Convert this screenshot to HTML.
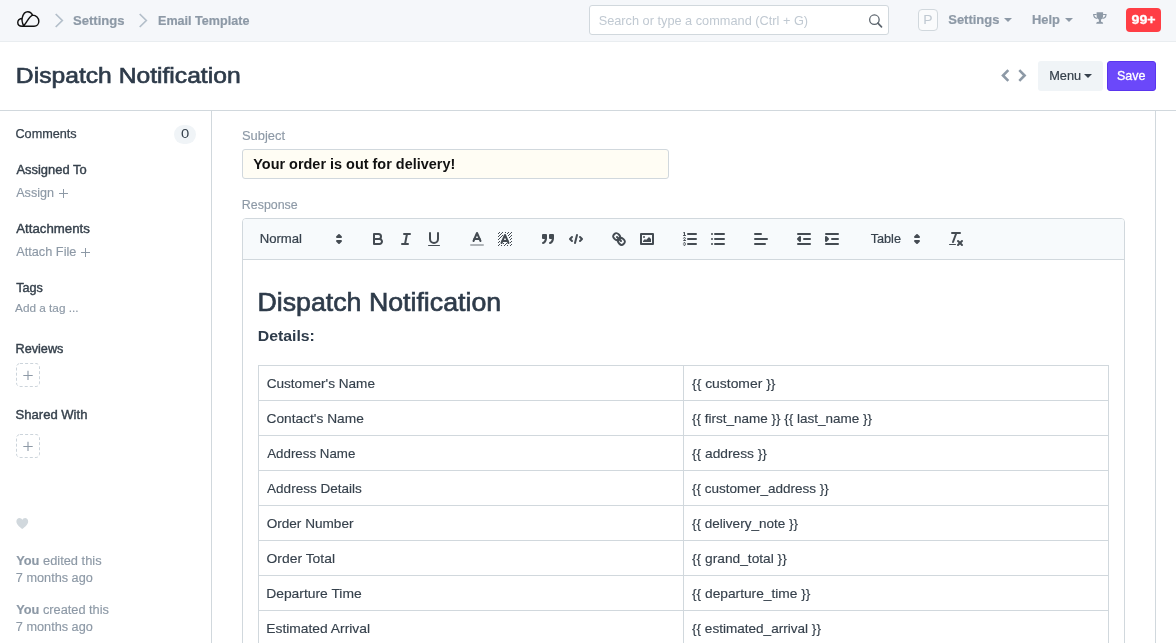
<!DOCTYPE html>
<html><head><meta charset="utf-8"><title>Dispatch Notification</title>
<style>
*{box-sizing:border-box;margin:0;padding:0}
html,body{width:1176px;height:643px;overflow:hidden;background:#fff;font-family:"Liberation Sans",sans-serif}
.a{position:absolute}
.t{position:absolute;white-space:nowrap;transform-origin:0 0;font-family:"Liberation Sans",sans-serif}
.t b{font-weight:bold}
#nav{left:0;top:0;width:1176px;height:42px;background:#f5f7fa;border-bottom:1px solid #e9edf0}
#search{left:589px;top:5px;width:300px;height:30px;border:1px solid #d1d8dd;border-radius:3px;background:#fff}
#avatar{left:918px;top:9px;width:20px;height:22px;border:1px solid #d1d8dd;border-radius:4px;background:#fafbfc}
#badge{left:1126px;top:8px;width:35px;height:24px;background:#ff3e45;border-radius:4px}
.caret{width:0;height:0;border-left:4px solid transparent;border-right:4px solid transparent;border-top:4px solid #8d99a6}
#hline{left:0;top:110px;width:1176px;height:1px;background:#d1d8dd}
#sline{left:211px;top:111px;width:1px;height:532px;background:#d1d8dd}
#vline{left:1155px;top:111px;width:1px;height:532px;background:#d1d8dd}
#menu{left:1038px;top:61px;width:65px;height:30px;background:#f0f4f7;border-radius:3px}
#save{left:1107px;top:61px;width:49px;height:30px;background:#6b48fa;border:1px solid #5a35ee;border-radius:3px}
#pill{left:174px;top:125px;width:22px;height:19px;border-radius:10px;background:#f0f4f7}
.dash{left:16px;width:24px;height:24px;border:1px dashed #d1d8dd;border-radius:3px}
.pl:before{content:"";position:absolute;left:0;top:4px;width:9px;height:1px;background:#8d99a6}
.pl:after{content:"";position:absolute;left:4px;top:0;width:1px;height:9px;background:#8d99a6}
.pl{width:9px;height:9px}
#subj{left:242px;top:149px;width:427px;height:30px;background:#fffdf4;border:1px solid #d1d8dd;border-radius:3px}
#ed{left:242px;top:218px;width:883px;height:440px;border:1px solid #d1d8dd;border-radius:4px 4px 0 0;background:#fff}
#tb{left:243px;top:219px;width:881px;height:40px;background:#f7fafc;border-radius:3px 3px 0 0}
#tbl{left:243px;top:259px;width:881px;height:1px;background:#d1d8dd}
.q{position:absolute;top:230px;width:18px;height:18px;fill:none;stroke:#444b52;stroke-width:2;stroke-linecap:round;stroke-linejoin:round}
.q .f{fill:#444b52;stroke:none}
.q .fs{fill:#444b52}
.q .th{stroke-width:1}
.q .tr{opacity:.4}
.q .ev{fill-rule:evenodd}
.gl{position:absolute;background:#d1d8dd}
</style></head><body>
<div class="a" id="nav"></div>
<svg class="a" style="left:16px;top:9px" width="25" height="20" viewBox="0 0 25 20"><path d="M7.300 16.900 C5.700 13.600 5.100 10.600 5.800 8.200 C6.700 4.500 8.900 1.900 11.700 1.900 C14 1.900 15.700 3.200 16.800 5.500 C12.600 7 11 13.300 7.300 16.900 Z M5.700 8.800 C3 9.300 1 11 1 13.400 C1 15.800 3 17.400 5.600 17.400 L18.300 17.400 C21.400 17.400 23.400 15 23.400 12 C23.400 8.500 20.600 5.700 16.800 5.500" fill="none" stroke="#111" stroke-width="1.520" stroke-linejoin="round" stroke-linecap="round" transform="translate(12.200 9.900) scale(0.940) translate(-12.100 -9.500)"/></svg>
<svg class="a" style="left:54px;top:13px" width="10" height="15" viewBox="0 0 10 15"><path d="M1.700 1 L8.300 7.500 L1.700 14" fill="none" stroke="#b4bfca" stroke-width="1.700"/></svg>
<svg class="a" style="left:138px;top:13px" width="10" height="15" viewBox="0 0 10 15"><path d="M1.700 1 L8.300 7.500 L1.700 14" fill="none" stroke="#b4bfca" stroke-width="1.700"/></svg>
<div class="a" id="search"></div>
<svg class="a" style="left:868px;top:14px" width="16" height="15" viewBox="0 0 16 15"><circle cx="6.400" cy="5.700" r="4.750" fill="none" stroke="#5b646d" stroke-width="1.300"/><path d="M9.900 9.200 L13.500 12.800" stroke="#5b646d" stroke-width="1.700" stroke-linecap="round"/></svg>
<div class="a" id="avatar"></div>
<div class="a caret" style="left:1004px;top:18px"></div>
<div class="a caret" style="left:1065px;top:18px"></div>
<svg class="a" style="left:1092px;top:12px" width="16" height="13" viewBox="0 0 16 13"><path d="M4.600 0.200 H11.100 V3.500 C11.100 6 9.800 7.200 9 7.600 V9.700 L10.400 10.100 L11.200 11.800 H4.100 L4.900 10.100 L6.900 9.700 V7.600 C6 7.200 4.600 6 4.600 3.500 Z" fill="#8d99a6"/><path d="M4.600 2.500 H1.700 C1.700 4.800 2.900 6.200 5.300 6.400 M11.100 2.500 H14 C14 4.800 12.800 6.200 10.400 6.400" fill="none" stroke="#8d99a6" stroke-width="1.200"/></svg>
<div class="a" id="badge"></div>
<div class="a" id="hline"></div>
<div class="a" id="sline"></div>
<div class="a" id="vline"></div>
<svg class="a" style="left:1000px;top:68px" width="28" height="15" viewBox="0 0 28 15"><path d="M8.300 2.200 L3 7.500 L8.300 12.800 M19.300 2.200 L24.600 7.500 L19.300 12.800" fill="none" stroke="#8d99a6" stroke-width="2.600"/></svg>
<div class="a" id="menu"></div>
<div class="a caret" style="left:1084px;top:74px;border-top-color:#36414c"></div>
<div class="a" id="save"></div>
<div class="a" id="pill"></div>
<div class="a pl" style="left:59px;top:189px"></div>
<div class="a pl" style="left:81px;top:248px"></div>
<svg class="a" style="left:14px;top:361px" width="28" height="28" viewBox="0 0 28 28"><rect x="2.500" y="2.500" width="23" height="23" rx="3.500" fill="none" stroke="#ccd4db" stroke-width="1" stroke-dasharray="3 2.100"/><path d="M14 9.800 V18.900 M9.300 14.500 H18.700" stroke="#8d99a6" stroke-width="1.100" fill="none"/></svg>
<svg class="a" style="left:14px;top:432px" width="28" height="28" viewBox="0 0 28 28"><rect x="2.500" y="2.500" width="23" height="23" rx="3.500" fill="none" stroke="#ccd4db" stroke-width="1" stroke-dasharray="3 2.100"/><path d="M14 9.800 V18.900 M9.300 14.500 H18.700" stroke="#8d99a6" stroke-width="1.100" fill="none"/></svg>
<svg class="a" style="left:16px;top:517px" width="13" height="13" viewBox="0 0 13 13"><path d="M6.500 11.500 C3.500 9 0.300 6.800 0.300 3.800 C0.300 1.800 1.800 0.500 3.500 0.500 C4.800 0.500 5.900 1.200 6.500 2.300 C7.100 1.200 8.200 0.500 9.500 0.500 C11.200 0.500 12.700 1.800 12.700 3.800 C12.700 6.800 9.500 9 6.500 11.500 Z" fill="#d1d8dd" transform="translate(0.100 0.600) scale(0.950 1)"/></svg>
<div class="a" id="subj"></div>
<div class="a" id="ed"></div>
<div class="a" id="tb"></div>
<div class="a" id="tbl"></div>
<!-- toolbar icons -->
<svg class="q" style="left:330px" viewBox="0 0 18 18"><polygon class="fs" style="stroke-width:1.900" points="7 11 9 13 11 11 7 11"/><polygon class="fs" style="stroke-width:1.900" points="7 7 9 5 11 7 7 7"/></svg>
<svg class="q" style="left:369px" viewBox="0 0 18 18"><path d="M5,4H9.500A2.500,2.500,0,0,1,12,6.500v0A2.500,2.500,0,0,1,9.500,9H5V4Z"/><path d="M5,9h5.500A2.500,2.500,0,0,1,13,11.500v0A2.500,2.500,0,0,1,10.500,14H5V9Z"/></svg>
<svg class="q" style="left:397px" viewBox="0 0 18 18"><line x1="7" x2="13" y1="4" y2="4"/><line x1="5" x2="11" y1="14" y2="14"/><line x1="8" x2="10" y1="14" y2="4"/></svg>
<svg class="q" style="left:425px" viewBox="0 0 18 18"><path d="M5,3V9a4.012,4.012,0,0,0,4,4H9a4.012,4.012,0,0,0,4-4V3"/><rect class="f" height="1" rx="0.500" ry="0.500" width="12" x="3" y="15"/></svg>
<svg class="q" style="left:468px" viewBox="0 0 18 18"><line class="tr" x1="3" x2="15" y1="15" y2="15"/><polyline points="5.500 11 9 3 12.500 11"/><line x1="11.630" x2="6.380" y1="9" y2="9"/></svg>
<svg class="q" style="left:496px" viewBox="0 0 18 18"><path class="f" d="M2 3h1v1h-1zM2 6h1v1h-1zM2 9h1v1h-1zM2 12h1v1h-1zM2 15h1v1h-1zM3 2h1v1h-1zM3 5h1v1h-1zM3 8h1v1h-1zM3 11h1v1h-1zM3 14h1v1h-1zM4 4h1v1h-1zM4 7h1v1h-1zM5 3h1v1h-1zM5 6h1v1h-1zM5 15h1v1h-1zM6 2h1v1h-1zM6 5h1v1h-1zM7 13h1v1h-1zM8 15h1v1h-1zM9 2h1v1h-1zM9 14h1v1h-1zM10 13h1v1h-1zM11 3h1v1h-1zM11 15h1v1h-1zM12 2h1v1h-1zM12 5h1v1h-1zM13 4h1v1h-1zM13 7h1v1h-1zM14 3h1v1h-1zM14 6h1v1h-1zM14 9h1v1h-1zM14 12h1v1h-1zM14 15h1v1h-1zM15 2h1v1h-1zM15 5h1v1h-1zM15 8h1v1h-1zM15 11h1v1h-1zM15 14h1v1h-1z"/><polyline points="5.500 13 9 5 12.500 13"/><line x1="11.630" x2="6.380" y1="11" y2="11"/></svg>
<svg class="q" style="left:539px" viewBox="0 0 18 18"><rect class="fs" height="3" width="3" x="4" y="5"/><rect class="fs" height="3" width="3" x="11" y="5"/><path class="fs ev" d="M7,8c0,4.031-3,5-3,5"/><path class="fs ev" d="M14,8c0,4.031-3,5-3,5"/></svg>
<svg class="q" style="left:567px" viewBox="0 0 18 18"><polyline points="5 7 3 9 5 11"/><polyline points="13 7 15 9 13 11"/><line x1="10" x2="8" y1="5" y2="13"/></svg>
<svg class="q" style="left:610px" viewBox="0 0 18 18"><line x1="7" x2="11" y1="7" y2="11"/><path d="M8.900,4.577a3.476,3.476,0,0,1,.36,4.679A3.476,3.476,0,0,1,4.577,8.900C3.185,7.500,2.035,6.400,4.217,4.217S7.500,3.185,8.900,4.577Z"/><path d="M13.423,9.100a3.476,3.476,0,0,0-4.679-.36,3.476,3.476,0,0,0,.36,4.679c1.392,1.392,2.500,2.542,4.679.36S14.815,10.500,13.423,9.100Z"/></svg>
<svg class="q" style="left:638px" viewBox="0 0 18 18"><rect height="10" width="12" x="3" y="4"/><circle class="f" cx="6" cy="7" r="1"/><polyline class="f" points="5 12 5 11 7 9 8 10 11 7 13 9 13 12 5 12"/></svg>
<svg class="q" style="left:681px" viewBox="0 0 18 18"><line x1="7" x2="15" y1="4" y2="4"/><line x1="7" x2="15" y1="9" y2="9"/><line x1="7" x2="15" y1="14" y2="14"/><line class="th" x1="2.500" x2="4.500" y1="5.500" y2="5.500"/><path class="f" d="M3.500,6A0.500,0.500,0,0,1,3,5.500V3.085l-0.276.138A0.500,0.500,0,0,1,2.053,3c-0.124-.247-0.023-0.324.224-0.447l1-.5A0.500,0.500,0,0,1,4,2.500v3A0.500,0.500,0,0,1,3.500,6Z"/><path class="th" d="M4.500,10.500h-2c0-.234,1.850-1.076,1.850-2.234A0.959,0.959,0,0,0,2.500,8.156"/><path class="th" d="M2.500,14.846a0.959,0.959,0,0,0,1.850-.109A0.700,0.700,0,0,0,3.750,14a0.688,0.688,0,0,0,.6-0.736,0.959,0.959,0,0,0-1.850-.109"/></svg>
<svg class="q" style="left:709px" viewBox="0 0 18 18"><line x1="6" x2="15" y1="4" y2="4"/><line x1="6" x2="15" y1="9" y2="9"/><line x1="6" x2="15" y1="14" y2="14"/><line x1="3" x2="3" y1="4" y2="4"/><line x1="3" x2="3" y1="9" y2="9"/><line x1="3" x2="3" y1="14" y2="14"/></svg>
<svg class="q" style="left:752px" viewBox="0 0 18 18"><line x1="3" x2="15" y1="9" y2="9"/><line x1="3" x2="13" y1="14" y2="14"/><line x1="3" x2="9" y1="4" y2="4"/></svg>
<svg class="q" style="left:795px" viewBox="0 0 18 18"><line x1="3" x2="15" y1="14" y2="14"/><line x1="3" x2="15" y1="4" y2="4"/><line x1="9" x2="15" y1="9" y2="9"/><polyline points="5 7 5 11 3 9 5 7"/></svg>
<svg class="q" style="left:823px" viewBox="0 0 18 18"><line x1="3" x2="15" y1="14" y2="14"/><line x1="3" x2="15" y1="4" y2="4"/><line x1="9" x2="15" y1="9" y2="9"/><polyline class="fs" points="3 7 3 11 5 9 3 7"/></svg>
<svg class="q" style="left:908px" viewBox="0 0 18 18"><polygon class="fs" style="stroke-width:1.900" points="7 11 9 13 11 11 7 11"/><polygon class="fs" style="stroke-width:1.900" points="7 7 9 5 11 7 7 7"/></svg>
<svg class="q" style="left:947px" viewBox="0 0 18 18"><line x1="5" x2="13" y1="3" y2="3"/><line x1="6" x2="9.350" y1="12" y2="3"/><line x1="11" x2="15" y1="11" y2="15"/><line x1="15" x2="11" y1="11" y2="15"/><rect class="f" height="1" rx="0.500" ry="0.500" width="7" x="2" y="14"/></svg>
<!-- table grid -->
<div class="gl" style="left:258px;top:365px;width:1px;height:290px"></div>
<div class="gl" style="left:683px;top:365px;width:1px;height:290px"></div>
<div class="gl" style="left:1108px;top:365px;width:1px;height:290px"></div>
<div class="gl" style="left:258px;top:365px;width:851px;height:1px"></div>
<div class="gl" style="left:258px;top:400px;width:851px;height:1px"></div>
<div class="gl" style="left:258px;top:435px;width:851px;height:1px"></div>
<div class="gl" style="left:258px;top:470px;width:851px;height:1px"></div>
<div class="gl" style="left:258px;top:505px;width:851px;height:1px"></div>
<div class="gl" style="left:258px;top:540px;width:851px;height:1px"></div>
<div class="gl" style="left:258px;top:575px;width:851px;height:1px"></div>
<div class="gl" style="left:258px;top:610px;width:851px;height:1px"></div>
<div id="txt" style="position:absolute;left:0;top:0;width:1176px;height:643px;will-change:transform">
<div class="t" style="left:73px;top:12px;font-size:12.8px;line-height:17px;font-weight:bold;color:#8d99a6;transform:translateX(0.01px) scaleX(1.0221);-webkit-text-stroke:0.2px #8d99a6;">Settings</div>
<div class="t" style="left:158px;top:12px;font-size:12.8px;line-height:17px;font-weight:bold;color:#8d99a6;transform:translateX(0.05px) scaleX(0.9829);-webkit-text-stroke:0.2px #8d99a6;">Email Template</div>
<div class="t" style="left:598px;top:12px;font-size:13.4px;line-height:17px;font-weight:normal;color:#c0c9d2;transform:translateX(0.63px) scaleX(0.9523);">Search or type a command (Ctrl + G)</div>
<div class="t" style="left:923px;top:11px;font-size:13.2px;line-height:17px;font-weight:normal;color:#c0c9d2;transform:translateX(0.37px) scaleX(1.0582);">P</div>
<div class="t" style="left:948px;top:11px;font-size:13.1px;line-height:17px;font-weight:bold;color:#8d99a6;transform:translateX(0.25px) scaleX(0.9901);-webkit-text-stroke:0.2px #8d99a6;">Settings</div>
<div class="t" style="left:1032px;top:11px;font-size:13.1px;line-height:17px;font-weight:bold;color:#8d99a6;transform:translateX(0.03px) scaleX(0.9851);-webkit-text-stroke:0.2px #8d99a6;">Help</div>
<div class="t" style="left:1131px;top:12px;font-size:12.6px;line-height:16px;font-weight:bold;color:#fff;transform:translateX(0.52px) scaleX(1.1262);-webkit-text-stroke:0.3px #fff;">99+</div>
<div class="t" style="left:15px;top:61px;font-size:22.2px;line-height:29px;font-weight:normal;color:#2e3b4a;transform:translateX(0.87px) scaleX(1.1112);-webkit-text-stroke:0.65px #2e3b4a;">Dispatch Notification</div>
<div class="t" style="left:1049px;top:67px;font-size:13.1px;line-height:17px;font-weight:normal;color:#36414c;transform:translateX(0.15px) scaleX(0.9747);-webkit-text-stroke:0.2px #36414c;">Menu</div>
<div class="t" style="left:1116px;top:67px;font-size:12.8px;line-height:17px;font-weight:normal;color:#fff;transform:translateX(0.95px) scaleX(0.9760);-webkit-text-stroke:0.3px #fff;">Save</div>
<div class="t" style="left:15px;top:126px;font-size:12.6px;line-height:16px;font-weight:normal;color:#36414c;transform:translateX(0.42px) scaleX(1.0067);-webkit-text-stroke:0.25px #36414c;">Comments</div>
<div class="t" style="left:180px;top:125px;font-size:12.9px;line-height:17px;font-weight:normal;color:#36414c;transform:translateX(0.97px) scaleX(1.1475);">0</div>
<div class="t" style="left:16px;top:163px;font-size:11.9px;line-height:15px;font-weight:normal;color:#36414c;transform:translateX(0.42px) scaleX(1.0871);-webkit-text-stroke:0.38px #36414c;">Assigned To</div>
<div class="t" style="left:16px;top:185px;font-size:12.6px;line-height:16px;font-weight:normal;color:#8d99a6;transform:translateX(0.22px) scaleX(0.9996);-webkit-text-stroke:0.15px #8d99a6;">Assign</div>
<div class="t" style="left:16px;top:221px;font-size:12.2px;line-height:16px;font-weight:normal;color:#36414c;transform:translateX(0.27px) scaleX(1.0867);-webkit-text-stroke:0.38px #36414c;">Attachments</div>
<div class="t" style="left:16px;top:244px;font-size:12.6px;line-height:16px;font-weight:normal;color:#8d99a6;transform:translateX(0.17px) scaleX(1.0126);-webkit-text-stroke:0.15px #8d99a6;">Attach File</div>
<div class="t" style="left:16px;top:281px;font-size:11.9px;line-height:15px;font-weight:normal;color:#36414c;transform:translateX(0.26px) scaleX(1.0615);-webkit-text-stroke:0.38px #36414c;">Tags</div>
<div class="t" style="left:15px;top:301px;font-size:11.3px;line-height:15px;font-weight:normal;color:#8d99a6;transform:translateX(0.11px) scaleX(1.0407);-webkit-text-stroke:0.15px #8d99a6;">Add a tag ...</div>
<div class="t" style="left:15px;top:342px;font-size:11.9px;line-height:15px;font-weight:normal;color:#36414c;transform:translateX(0.47px) scaleX(1.0671);-webkit-text-stroke:0.38px #36414c;">Reviews</div>
<div class="t" style="left:15px;top:407px;font-size:12.4px;line-height:16px;font-weight:normal;color:#36414c;transform:translateX(0.56px) scaleX(1.0535);-webkit-text-stroke:0.38px #36414c;">Shared With</div>
<div class="t" style="left:16px;top:553px;font-size:12.3px;line-height:16px;font-weight:normal;color:#8d99a6;transform:translateX(0.16px) scaleX(1.0442);-webkit-text-stroke:0.15px #8d99a6;"><b>You</b> edited this</div>
<div class="t" style="left:15px;top:570px;font-size:12.3px;line-height:16px;font-weight:normal;color:#8d99a6;transform:translateX(0.86px) scaleX(1.0323);-webkit-text-stroke:0.15px #8d99a6;">7 months ago</div>
<div class="t" style="left:16px;top:602px;font-size:12.3px;line-height:16px;font-weight:normal;color:#8d99a6;transform:translateX(0.16px) scaleX(1.0390);-webkit-text-stroke:0.15px #8d99a6;"><b>You</b> created this</div>
<div class="t" style="left:15px;top:619px;font-size:12.3px;line-height:16px;font-weight:normal;color:#8d99a6;transform:translateX(0.86px) scaleX(1.0323);-webkit-text-stroke:0.15px #8d99a6;">7 months ago</div>
<div class="t" style="left:241px;top:128px;font-size:12.6px;line-height:16px;font-weight:normal;color:#8d99a6;transform:translateX(0.92px) scaleX(1.0247);-webkit-text-stroke:0.15px #8d99a6;">Subject</div>
<div class="t" style="left:253px;top:155px;font-size:14.5px;line-height:19px;font-weight:bold;color:#111;transform:translateX(0.24px) scaleX(0.9963);">Your order is out for delivery!</div>
<div class="t" style="left:241px;top:197px;font-size:12.4px;line-height:16px;font-weight:normal;color:#8d99a6;transform:translateX(0.84px) scaleX(1.0004);-webkit-text-stroke:0.15px #8d99a6;">Response</div>
<div class="t" style="left:259px;top:231px;font-size:12.2px;line-height:16px;font-weight:normal;color:#36414c;transform:translateX(0.70px) scaleX(1.0775);-webkit-text-stroke:0.2px #36414c;">Normal</div>
<div class="t" style="left:870px;top:231px;font-size:12.2px;line-height:16px;font-weight:normal;color:#36414c;transform:translateX(0.64px) scaleX(1.0413);-webkit-text-stroke:0.2px #36414c;">Table</div>
<div class="t" style="left:257px;top:285px;font-size:26.2px;line-height:34px;font-weight:normal;color:#2e3b4a;transform:translateX(0.40px) scaleX(1.0212);-webkit-text-stroke:0.65px #2e3b4a;">Dispatch Notification</div>
<div class="t" style="left:257px;top:326px;font-size:15.5px;line-height:20px;font-weight:bold;color:#2e3b4a;transform:translateX(0.70px) scaleX(1.0211);">Details:</div>
<div class="t" style="left:266px;top:375px;font-size:13.6px;line-height:18px;font-weight:normal;color:#36414c;transform:translateX(0.63px) scaleX(1.0002);-webkit-text-stroke:0.15px #36414c;">Customer's Name</div>
<div class="t" style="left:692px;top:375px;font-size:13.6px;line-height:18px;font-weight:normal;color:#36414c;transform:translateX(0.01px) scaleX(1.0223);-webkit-text-stroke:0.15px #36414c;">{{ customer }}</div>
<div class="t" style="left:266px;top:410px;font-size:13.6px;line-height:18px;font-weight:normal;color:#36414c;transform:translateX(0.54px) scaleX(1.0101);-webkit-text-stroke:0.15px #36414c;">Contact's Name</div>
<div class="t" style="left:692px;top:410px;font-size:13.6px;line-height:18px;font-weight:normal;color:#36414c;transform:translateX(0.00px) scaleX(0.9931);-webkit-text-stroke:0.15px #36414c;">{{ first_name }} {{ last_name }}</div>
<div class="t" style="left:267px;top:445px;font-size:13.6px;line-height:18px;font-weight:normal;color:#36414c;transform:translateX(0.22px) scaleX(0.9802);-webkit-text-stroke:0.15px #36414c;">Address Name</div>
<div class="t" style="left:692px;top:445px;font-size:13.6px;line-height:18px;font-weight:normal;color:#36414c;transform:translateX(0.01px) scaleX(1.0112);-webkit-text-stroke:0.15px #36414c;">{{ address }}</div>
<div class="t" style="left:267px;top:480px;font-size:13.6px;line-height:18px;font-weight:normal;color:#36414c;transform:translateX(0.07px) scaleX(0.9948);-webkit-text-stroke:0.15px #36414c;">Address Details</div>
<div class="t" style="left:692px;top:480px;font-size:13.6px;line-height:18px;font-weight:normal;color:#36414c;transform:translateX(0.01px) scaleX(0.9946);-webkit-text-stroke:0.15px #36414c;">{{ customer_address }}</div>
<div class="t" style="left:266px;top:515px;font-size:13.6px;line-height:18px;font-weight:normal;color:#36414c;transform:translateX(0.66px) scaleX(0.9998);-webkit-text-stroke:0.15px #36414c;">Order Number</div>
<div class="t" style="left:692px;top:515px;font-size:13.6px;line-height:18px;font-weight:normal;color:#36414c;transform:translateX(0.01px) scaleX(0.9951);-webkit-text-stroke:0.15px #36414c;">{{ delivery_note }}</div>
<div class="t" style="left:266px;top:550px;font-size:13.6px;line-height:18px;font-weight:normal;color:#36414c;transform:translateX(0.58px) scaleX(1.0208);-webkit-text-stroke:0.15px #36414c;">Order Total</div>
<div class="t" style="left:692px;top:550px;font-size:13.6px;line-height:18px;font-weight:normal;color:#36414c;transform:translateX(0.01px) scaleX(1.0111);-webkit-text-stroke:0.15px #36414c;">{{ grand_total }}</div>
<div class="t" style="left:266px;top:585px;font-size:13.6px;line-height:18px;font-weight:normal;color:#36414c;transform:translateX(0.20px) scaleX(1.0192);-webkit-text-stroke:0.15px #36414c;">Departure Time</div>
<div class="t" style="left:692px;top:585px;font-size:13.6px;line-height:18px;font-weight:normal;color:#36414c;transform:translateX(0.01px) scaleX(1.0107);-webkit-text-stroke:0.15px #36414c;">{{ departure_time }}</div>
<div class="t" style="left:266px;top:620px;font-size:13.6px;line-height:18px;font-weight:normal;color:#36414c;transform:translateX(0.25px) scaleX(1.0176);-webkit-text-stroke:0.15px #36414c;">Estimated Arrival</div>
<div class="t" style="left:692px;top:620px;font-size:13.6px;line-height:18px;font-weight:normal;color:#36414c;transform:translateX(0.01px) scaleX(0.9975);-webkit-text-stroke:0.15px #36414c;">{{ estimated_arrival }}</div>
</div>
</body></html>
